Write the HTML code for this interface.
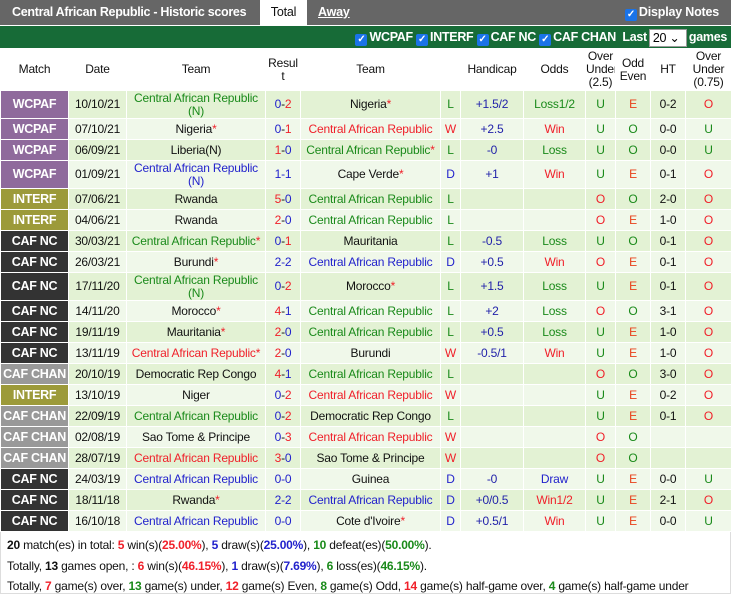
<!DOCTYPE html>
<html><head><meta charset="utf-8"><style>
*{margin:0;padding:0;box-sizing:border-box}
body{width:731px;height:592px;overflow:hidden;background:#fff;font-family:"Liberation Sans",Arial,sans-serif;font-size:12px;color:#111;letter-spacing:-0.2px}
.top{height:25px;background:#666;position:relative;color:#fff;font-weight:bold;font-size:12.5px;white-space:nowrap}
.top .t{position:absolute;left:12px;top:5px;letter-spacing:-0.3px}
.top .tot{position:absolute;left:260px;top:0;width:47px;height:25px;background:#fff;color:#111;text-align:center;line-height:24px;font-weight:normal}
.top .aw{position:absolute;left:318px;top:5px;text-decoration:underline}
.top .dn{position:absolute;right:12px;top:5px}
.cb{display:inline-block;width:12px;height:12px;background:#1a73e8;border-radius:2px;vertical-align:-1px;color:#fff;font-size:10px;line-height:12px;text-align:center;margin-right:2px}
.gb{height:22px;background:#176b37;margin-top:1px;color:#fff;font-weight:bold;font-size:12.5px;text-align:right;padding-right:4px;line-height:22px;white-space:nowrap;letter-spacing:-0.3px}
.sel{display:inline-block;background:#fff;color:#000;font-weight:normal;width:38px;height:18px;line-height:16px;vertical-align:middle;text-align:left;padding-left:3px;border:1px solid #999;margin:0 2px}
table{border-collapse:collapse;width:731px;table-layout:fixed}
td,th{text-align:center;border:1px solid #fff;padding:0;line-height:13px;white-space:nowrap;overflow:hidden}
th{font-weight:normal;height:42px;background:#fff;font-size:12px;color:#111;line-height:13px}
tr.o td{background:#e3f2d4}tr.e td{background:#f0f8ea}
tr td{height:21px}tr.d td{height:28px}
td.m{color:#fff;font-weight:bold;font-size:12.5px;letter-spacing:-0.3px}
.W1{background:#8f6a9c!important}.I1{background:#9c9a3a!important}.C1{background:#333!important}.H1{background:#999!important}
.g{color:#1a8a1a}.r{color:#f0202a}.b{color:#2222cc}.s{color:#f0202a}.h{color:#2222aa}.eo{color:#e8401a}
.f{border:1px solid #ddd;border-top:none;height:62px;padding:3px 0 0 6px;font-size:12px;line-height:20.5px;white-space:nowrap}
</style></head><body>
<div class="top"><span class="t">Central African Republic - Historic scores</span><span class="tot">Total</span><span class="aw">Away</span><span class="dn"><span class="cb">✓</span>Display Notes</span></div>
<div class="gb"><span class="cb">✓</span>WCPAF <span class="cb">✓</span>INTERF <span class="cb">✓</span>CAF NC <span class="cb">✓</span>CAF CHAN &nbsp;Last<span class="sel">20 ⌄</span>games</div>
<table>
<colgroup><col style="width:68px"><col style="width:58px"><col style="width:139px"><col style="width:35px"><col style="width:140px"><col style="width:20px"><col style="width:63px"><col style="width:62px"><col style="width:30px"><col style="width:35px"><col style="width:35px"><col style="width:46px"></colgroup>
<tr><th>Match</th><th>Date</th><th>Team</th><th>Resul<br>t</th><th>Team</th><th></th><th>Handicap</th><th>Odds</th><th>Over<br>Under<br>(2.5)</th><th>Odd<br>Even</th><th>HT</th><th>Over<br>Under<br>(0.75)</th></tr>
<tr class="o d"><td class="m W1">WCPAF</td><td>10/10/21</td><td class="g">Central African Republic<br>(N)</td><td><span class="b">0</span>-<span class="r">2</span></td><td>Nigeria<span class="s">*</span></td><td class="g">L</td><td class="h">+1.5/2</td><td class="g">Loss1/2</td><td class="g">U</td><td class="eo">E</td><td>0-2</td><td class="r">O</td></tr>
<tr class="e"><td class="m W1">WCPAF</td><td>07/10/21</td><td>Nigeria<span class="s">*</span></td><td><span class="b">0</span>-<span class="r">1</span></td><td class="r">Central African Republic</td><td class="r">W</td><td class="h">+2.5</td><td class="r">Win</td><td class="g">U</td><td class="g">O</td><td>0-0</td><td class="g">U</td></tr>
<tr class="o"><td class="m W1">WCPAF</td><td>06/09/21</td><td>Liberia(N)</td><td><span class="r">1</span>-<span class="b">0</span></td><td class="g">Central African Republic<span class="s">*</span></td><td class="g">L</td><td class="h">-0</td><td class="g">Loss</td><td class="g">U</td><td class="g">O</td><td>0-0</td><td class="g">U</td></tr>
<tr class="e d"><td class="m W1">WCPAF</td><td>01/09/21</td><td class="b">Central African Republic<br>(N)</td><td class="b">1-1</td><td>Cape Verde<span class="s">*</span></td><td class="b">D</td><td class="h">+1</td><td class="r">Win</td><td class="g">U</td><td class="eo">E</td><td>0-1</td><td class="r">O</td></tr>
<tr class="o"><td class="m I1">INTERF</td><td>07/06/21</td><td>Rwanda</td><td><span class="r">5</span>-<span class="b">0</span></td><td class="g">Central African Republic</td><td class="g">L</td><td></td><td></td><td class="r">O</td><td class="g">O</td><td>2-0</td><td class="r">O</td></tr>
<tr class="e"><td class="m I1">INTERF</td><td>04/06/21</td><td>Rwanda</td><td><span class="r">2</span>-<span class="b">0</span></td><td class="g">Central African Republic</td><td class="g">L</td><td></td><td></td><td class="r">O</td><td class="eo">E</td><td>1-0</td><td class="r">O</td></tr>
<tr class="o"><td class="m C1">CAF NC</td><td>30/03/21</td><td class="g">Central African Republic<span class="s">*</span></td><td><span class="b">0</span>-<span class="r">1</span></td><td>Mauritania</td><td class="g">L</td><td class="h">-0.5</td><td class="g">Loss</td><td class="g">U</td><td class="g">O</td><td>0-1</td><td class="r">O</td></tr>
<tr class="e"><td class="m C1">CAF NC</td><td>26/03/21</td><td>Burundi<span class="s">*</span></td><td class="b">2-2</td><td class="b">Central African Republic</td><td class="b">D</td><td class="h">+0.5</td><td class="r">Win</td><td class="r">O</td><td class="eo">E</td><td>0-1</td><td class="r">O</td></tr>
<tr class="o d"><td class="m C1">CAF NC</td><td>17/11/20</td><td class="g">Central African Republic<br>(N)</td><td><span class="b">0</span>-<span class="r">2</span></td><td>Morocco<span class="s">*</span></td><td class="g">L</td><td class="h">+1.5</td><td class="g">Loss</td><td class="g">U</td><td class="eo">E</td><td>0-1</td><td class="r">O</td></tr>
<tr class="e"><td class="m C1">CAF NC</td><td>14/11/20</td><td>Morocco<span class="s">*</span></td><td><span class="r">4</span>-<span class="b">1</span></td><td class="g">Central African Republic</td><td class="g">L</td><td class="h">+2</td><td class="g">Loss</td><td class="r">O</td><td class="g">O</td><td>3-1</td><td class="r">O</td></tr>
<tr class="o"><td class="m C1">CAF NC</td><td>19/11/19</td><td>Mauritania<span class="s">*</span></td><td><span class="r">2</span>-<span class="b">0</span></td><td class="g">Central African Republic</td><td class="g">L</td><td class="h">+0.5</td><td class="g">Loss</td><td class="g">U</td><td class="eo">E</td><td>1-0</td><td class="r">O</td></tr>
<tr class="e"><td class="m C1">CAF NC</td><td>13/11/19</td><td class="r">Central African Republic<span class="s">*</span></td><td><span class="r">2</span>-<span class="b">0</span></td><td>Burundi</td><td class="r">W</td><td class="h">-0.5/1</td><td class="r">Win</td><td class="g">U</td><td class="eo">E</td><td>1-0</td><td class="r">O</td></tr>
<tr class="o"><td class="m H1">CAF CHAN</td><td>20/10/19</td><td>Democratic Rep Congo</td><td><span class="r">4</span>-<span class="b">1</span></td><td class="g">Central African Republic</td><td class="g">L</td><td></td><td></td><td class="r">O</td><td class="g">O</td><td>3-0</td><td class="r">O</td></tr>
<tr class="e"><td class="m I1">INTERF</td><td>13/10/19</td><td>Niger</td><td><span class="b">0</span>-<span class="r">2</span></td><td class="r">Central African Republic</td><td class="r">W</td><td></td><td></td><td class="g">U</td><td class="eo">E</td><td>0-2</td><td class="r">O</td></tr>
<tr class="o"><td class="m H1">CAF CHAN</td><td>22/09/19</td><td class="g">Central African Republic</td><td><span class="b">0</span>-<span class="r">2</span></td><td>Democratic Rep Congo</td><td class="g">L</td><td></td><td></td><td class="g">U</td><td class="eo">E</td><td>0-1</td><td class="r">O</td></tr>
<tr class="e"><td class="m H1">CAF CHAN</td><td>02/08/19</td><td>Sao Tome &amp; Principe</td><td><span class="b">0</span>-<span class="r">3</span></td><td class="r">Central African Republic</td><td class="r">W</td><td></td><td></td><td class="r">O</td><td class="g">O</td><td></td><td></td></tr>
<tr class="o"><td class="m H1">CAF CHAN</td><td>28/07/19</td><td class="r">Central African Republic</td><td><span class="r">3</span>-<span class="b">0</span></td><td>Sao Tome &amp; Principe</td><td class="r">W</td><td></td><td></td><td class="r">O</td><td class="g">O</td><td></td><td></td></tr>
<tr class="e"><td class="m C1">CAF NC</td><td>24/03/19</td><td class="b">Central African Republic</td><td class="b">0-0</td><td>Guinea</td><td class="b">D</td><td class="h">-0</td><td class="b">Draw</td><td class="g">U</td><td class="eo">E</td><td>0-0</td><td class="g">U</td></tr>
<tr class="o"><td class="m C1">CAF NC</td><td>18/11/18</td><td>Rwanda<span class="s">*</span></td><td class="b">2-2</td><td class="b">Central African Republic</td><td class="b">D</td><td class="h">+0/0.5</td><td class="r">Win1/2</td><td class="g">U</td><td class="eo">E</td><td>2-1</td><td class="r">O</td></tr>
<tr class="e"><td class="m C1">CAF NC</td><td>16/10/18</td><td class="b">Central African Republic</td><td class="b">0-0</td><td>Cote d'Ivoire<span class="s">*</span></td><td class="b">D</td><td class="h">+0.5/1</td><td class="r">Win</td><td class="g">U</td><td class="eo">E</td><td>0-0</td><td class="g">U</td></tr>
</table>
<div class="f">
<div><b>20</b> match(es) in total: <b class="r">5</b> win(s)(<b class="r">25.00%</b>), <b class="b">5</b> draw(s)(<b class="b">25.00%</b>), <b class="g">10</b> defeat(es)(<b class="g">50.00%</b>).</div>
<div>Totally, <b>13</b> games open, : <b class="r">6</b> win(s)(<b class="r">46.15%</b>), <b class="b">1</b> draw(s)(<b class="b">7.69%</b>), <b class="g">6</b> loss(es)(<b class="g">46.15%</b>).</div>
<div>Totally, <b class="r">7</b> game(s) over, <b class="g">13</b> game(s) under, <b class="r">12</b> game(s) Even, <b class="g">8</b> game(s) Odd, <b class="r">14</b> game(s) half-game over, <b class="g">4</b> game(s) half-game under</div>
</div>
</body></html>
